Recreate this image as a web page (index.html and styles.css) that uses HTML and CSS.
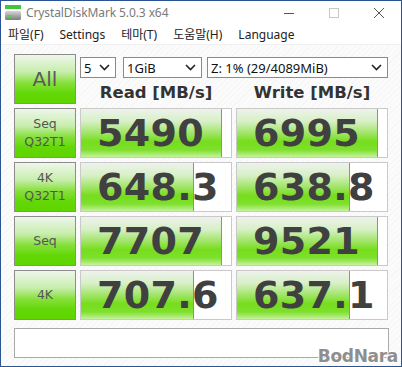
FILE: index.html
```html
<!DOCTYPE html>
<html lang="ko">
<head>
    <meta charset="UTF-8">
    <title>CrystalDiskMark 5.0.3 x64</title>
    <link rel="stylesheet" href="styles.css">
</head>
<body>
    <div class="window">
        <div class="titlebar">
            <svg class="app-icon" width="18" height="16" viewBox="0 0 18 16">
                <defs>
                    <linearGradient id="drive" x1="0" y1="0" x2="0" y2="1">
                        <stop offset="0" stop-color="#d6d6d6"/>
                        <stop offset="1" stop-color="#7c7c7c"/>
                    </linearGradient>
                </defs>
                <rect x="1" y="0" width="16" height="4" fill="#3fc63a"/>
                <rect x="1" y="6" width="16" height="9" rx="1.5" fill="url(#drive)"/>
                <rect x="3" y="10" width="5" height="2" fill="#4fd84a"/>
            </svg>
            <span class="title">CrystalDiskMark 5.0.3 x64</span>
            <div class="controls">
                <svg width="12" height="12" viewBox="0 0 12 12"><path d="M1 6.5h10" stroke="#555" stroke-width="1"/></svg>
                <svg width="12" height="12" viewBox="0 0 12 12"><rect x="1.5" y="1.5" width="9" height="9" fill="none" stroke="#c8c8c8"/></svg>
                <svg width="12" height="12" viewBox="0 0 12 12"><path d="M1 1l10 10M11 1L1 11" stroke="#555" stroke-width="1"/></svg>
            </div>
        </div>

        <div class="menubar">
            <span>파일(F)</span>
            <span>Settings</span>
            <span>테마(T)</span>
            <span>도움말(H)</span>
            <span>Language</span>
        </div>

        <div class="content">
            <div class="grid">
                <div class="label label-all">All</div>
                <div class="top-right">
                    <div class="selects">
                        <div class="select sel-count"><span>5</span><svg width="11" height="7" viewBox="0 0 11 7"><path d="M1 1l4.5 4.5L10 1" fill="none" stroke="#222" stroke-width="1.6"/></svg></div>
                        <div class="select sel-size"><span>1GiB</span><svg width="11" height="7" viewBox="0 0 11 7"><path d="M1 1l4.5 4.5L10 1" fill="none" stroke="#222" stroke-width="1.6"/></svg></div>
                        <div class="select sel-drive"><span>Z: 1% (29/4089MiB)</span><svg width="11" height="7" viewBox="0 0 11 7"><path d="M1 1l4.5 4.5L10 1" fill="none" stroke="#222" stroke-width="1.6"/></svg></div>
                    </div>
                    <div class="headers">
                        <div class="head">Read [MB/s]</div>
                        <div class="head">Write [MB/s]</div>
                    </div>
                </div>

                <div class="label">Seq<br>Q32T1</div>
                <div class="cell"><div class="bar" style="width: 94%"></div><span class="num">5490</span></div>
                <div class="cell"><div class="bar" style="width: 94%"></div><span class="num">6995</span></div>

                <div class="label">4K<br>Q32T1</div>
                <div class="cell"><div class="bar" style="width: 75.5%"></div><span class="num">648.3</span></div>
                <div class="cell"><div class="bar" style="width: 75.5%"></div><span class="num">638.8</span></div>

                <div class="label">Seq</div>
                <div class="cell"><div class="bar" style="width: 94%"></div><span class="num">7707</span></div>
                <div class="cell"><div class="bar" style="width: 94%"></div><span class="num">9521</span></div>

                <div class="label">4K</div>
                <div class="cell"><div class="bar" style="width: 75.5%"></div><span class="num">707.6</span></div>
                <div class="cell"><div class="bar" style="width: 75.5%"></div><span class="num">637.1</span></div>
            </div>

            <div class="comment"></div>
        </div>

        <div class="watermark">BodNara</div>
    </div>
</body>
</html>
```

FILE: styles.css
```css
body {
    margin: 0;
    font-family: "Noto Sans", "Noto Sans CJK KR", sans-serif;
}

.window {
    position: relative;
    width: 402px;
    height: 367px;
    box-sizing: border-box;
    border: 1px solid #2b5592;
    background: #fff;
    display: flex;
    flex-direction: column;
    overflow: hidden;
}

.titlebar {
    height: 23px;
    display: flex;
    align-items: center;
    padding-left: 3px;
}

.app-icon {
    margin-top: 1px;
}

.title {
    margin-left: 4px;
    font-size: 12px;
    color: #7a7a7a;
    letter-spacing: -0.1px;
}

.controls {
    margin-left: auto;
    display: flex;
    gap: 33px;
    padding-right: 16px;
}

.menubar {
    height: 20px;
    display: flex;
    align-items: center;
    gap: 16px;
    padding-left: 7px;
    font-size: 12px;
    color: #222;
    border-bottom: 1px solid #f0f0f0;
}

.content {
    flex: 1;
    padding: 9px 13px 0;
    background: repeating-linear-gradient(135deg, #fbfbfb 0 3px, #f5f6f5 3px 4px);
}

.grid {
    display: grid;
    grid-template-columns: 62px 152px 152px;
    grid-auto-rows: 50px;
    column-gap: 4px;
    row-gap: 4px;
}

.label {
    box-sizing: border-box;
    border: 1px solid #8c8c8c;
    background: linear-gradient(to bottom, #eef6ea 0%, #c8eeae 35%, #86e03c 58%, #62d806 80%, #5fd400 100%);
    display: flex;
    align-items: center;
    justify-content: center;
    text-align: center;
    font-family: "DejaVu Sans", sans-serif;
    font-size: 12.5px;
    line-height: 18px;
    color: #555;
}

.label-all {
    font-size: 20px;
    color: #5a5a5a;
}

.top-right {
    grid-column: 2 / 4;
    display: flex;
    flex-direction: column;
}

.selects {
    display: flex;
    margin-top: 3px;
    height: 21px;
}

.select {
    box-sizing: border-box;
    height: 21px;
    border: 1px solid #8a8a8a;
    background: #fff;
    display: flex;
    align-items: center;
    justify-content: space-between;
    padding: 0 5px 0 3px;
    font-size: 13px;
    color: #111;
}

.sel-count {
    width: 36px;
}

.sel-size {
    width: 79px;
    margin-left: 7px;
}

.sel-drive {
    width: 181px;
    margin-left: 5px;
}

.headers {
    display: grid;
    grid-template-columns: 152px 152px;
    column-gap: 4px;
    flex: 1;
    align-items: center;
    padding-top: 3px;
}

.head {
    text-align: center;
    font-family: "DejaVu Sans", sans-serif;
    font-weight: bold;
    font-size: 16.5px;
    color: #333;
}

.cell {
    position: relative;
    box-sizing: border-box;
    border: 1px solid #c9c9c9;
    background: #fff;
    display: flex;
    align-items: center;
}

.bar {
    position: absolute;
    left: 0;
    top: 0;
    bottom: 0;
    box-sizing: border-box;
    border-right: 1px solid #5cc21a;
    background: linear-gradient(to bottom, #eef2ec 0%, #d8f0c8 25%, #a6e670 48%, #76dd1c 68%, #7ee02c 85%, #c4f29c 100%);
}

.num {
    position: relative;
    padding-left: 16px;
    font-family: "DejaVu Sans", sans-serif;
    font-weight: bold;
    font-size: 38px;
    color: #404040;
    letter-spacing: 0.3px;
}

.comment {
    box-sizing: border-box;
    margin-top: 8px;
    width: 375px;
    height: 30px;
    border: 1px solid #aaa;
    background: #fff;
}

.watermark {
    position: absolute;
    right: 3px;
    bottom: 0;
    font-family: "DejaVu Sans", sans-serif;
    font-weight: bold;
    font-size: 17px;
    color: #8e8e8e;
    letter-spacing: -0.3px;
    text-shadow: 1px 0 #fff, -1px 0 #fff, 0 1px #fff, 0 -1px #fff;
}
```
